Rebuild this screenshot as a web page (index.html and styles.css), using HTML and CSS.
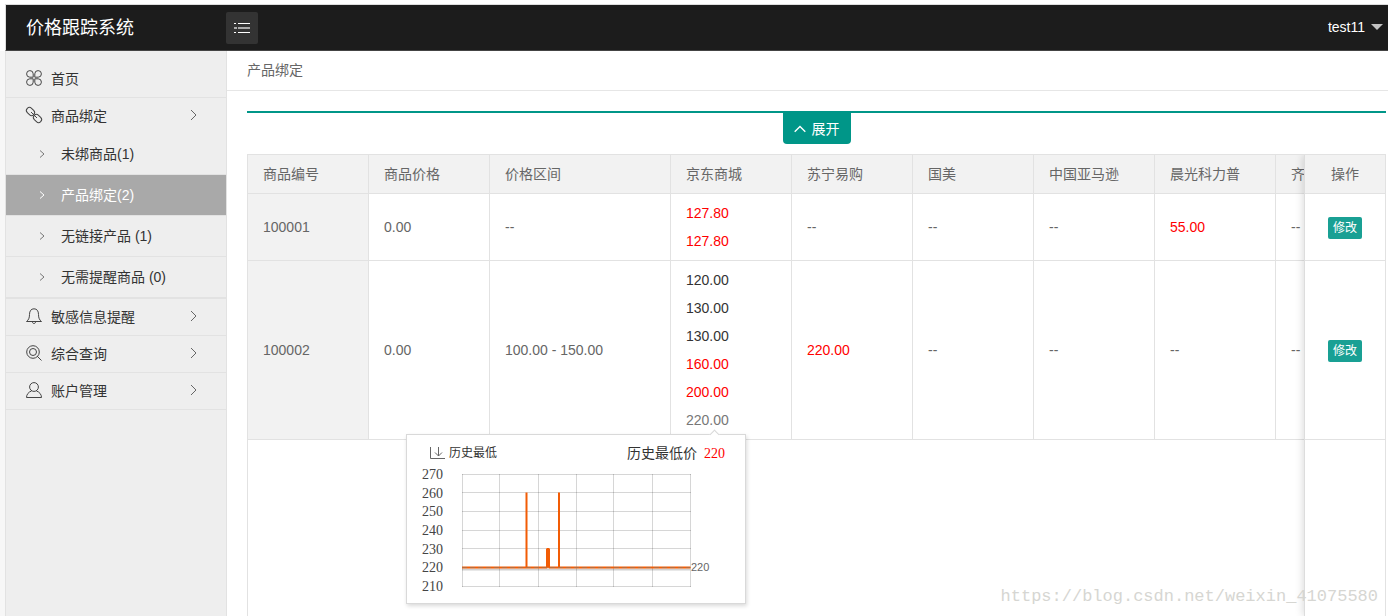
FILE: index.html
```html
<!DOCTYPE html>
<html lang="zh-CN">
<head>
<meta charset="utf-8">
<title>价格跟踪系统</title>
<link rel="stylesheet" href="styles.css">
</head>
<body>
<div class="app">
  <header class="topbar">
    <h1 class="brand">价格跟踪系统</h1>
    <button class="menu-toggle" type="button" aria-label="菜单">
      <svg width="16" height="12" viewBox="0 0 16 12" fill="none" stroke="#fff"><path d="M0 1.500h2M4 1.500h12M0 10.500h2M4 10.500h12"/><path d="M0 6h3M4 6h12" stroke="#aaa" stroke-width="2"/></svg>
    </button>
    <button class="user" type="button">test11<span class="caret"></span></button>
  </header>
  <div class="body">
    <nav class="sidebar">
      <ul class="nav">
        <li class="nav-item"><a href="#" class="nav-link">
          <svg class="icon" viewBox="0 0 16 16"><path d="M7.200 7.200H3.800a3.300 3.300 0 1 1 3.400-3.400zM8.800 7.200h3.400a3.300 3.300 0 1 0-3.400-3.400zM7.200 8.800H3.800a3.300 3.300 0 1 0 3.400 3.400zM8.800 8.800h3.400a3.300 3.300 0 1 1-3.400 3.400z"/></svg>
          <span>首页</span></a></li>
        <li class="nav-item"><a href="#" class="nav-link">
          <svg class="icon" viewBox="0 0 16 16"><rect x="0" y="1.500" width="9" height="6" rx="3" transform="rotate(45 4.500 4.500)"/><rect x="7" y="8.500" width="9" height="6" rx="3" transform="rotate(45 11.500 11.500)"/><path d="M5 5l6 6"/></svg>
          <span>商品绑定</span>
          <svg class="arrow" viewBox="0 0 7 12"><path d="M1 1l5 5-5 5"/></svg></a>
          <ul class="subnav">
            <li><a href="#" class="sub-link"><svg class="sub-arrow" viewBox="0 0 6 8"><path d="M1 .5L5 4 1 7.500"/></svg>未绑商品(1)</a></li>
            <li><a href="#" class="sub-link active"><svg class="sub-arrow" viewBox="0 0 6 8"><path d="M1 .5L5 4 1 7.500"/></svg>产品绑定(2)</a></li>
            <li><a href="#" class="sub-link"><svg class="sub-arrow" viewBox="0 0 6 8"><path d="M1 .5L5 4 1 7.500"/></svg>无链接产品 (1)</a></li>
            <li><a href="#" class="sub-link"><svg class="sub-arrow" viewBox="0 0 6 8"><path d="M1 .5L5 4 1 7.500"/></svg>无需提醒商品 (0)</a></li>
          </ul></li>
        <li class="nav-item"><a href="#" class="nav-link">
          <svg class="icon" viewBox="0 0 16 16"><path d="M.5 13.500C2.500 12 3.500 10 3.500 6.500 3.500 3 5 .8 8 .8s4.500 2.200 4.500 5.700c0 3.500 1 5.500 3 7zM6.500 14c0 2 3 2 3 0"/></svg>
          <span>敏感信息提醒</span>
          <svg class="arrow" viewBox="0 0 7 12"><path d="M1 1l5 5-5 5"/></svg></a></li>
        <li class="nav-item"><a href="#" class="nav-link">
          <svg class="icon" viewBox="0 0 16 16"><circle cx="7" cy="7" r="6.300"/><circle cx="7" cy="7" r="3.500"/><path d="M11 11l4.500 4.500"/></svg>
          <span>综合查询</span>
          <svg class="arrow" viewBox="0 0 7 12"><path d="M1 1l5 5-5 5"/></svg></a></li>
        <li class="nav-item"><a href="#" class="nav-link">
          <svg class="icon" viewBox="0 0 16 16"><circle cx="8" cy="5" r="4.400"/><path d="M5.500 9C2.500 10 .5 12.500.5 15.500h15c0-3-2-5.500-5-6.500"/></svg>
          <span>账户管理</span>
          <svg class="arrow" viewBox="0 0 7 12"><path d="M1 1l5 5-5 5"/></svg></a></li>
      </ul>
    </nav>
    <main class="main">
      <div class="crumb">产品绑定</div>
      <div class="filter">
        <button class="expand" type="button"><svg width="12" height="8" viewBox="0 0 12 8" fill="none" stroke="#fff" stroke-width="1.400"><path d="M.7 6.700L6 1.500l5.300 5.200"/></svg>展开</button>
      </div>
      <div class="grid">
        <div class="grid-scroll">
          <table class="data">
            <colgroup><col class="c"><col class="c"><col class="c-wide"><col class="c"><col class="c"><col class="c"><col class="c"><col class="c"><col class="c"></colgroup>
            <thead><tr><th>商品编号</th><th>商品价格</th><th>价格区间</th><th>京东商城</th><th>苏宁易购</th><th>国美</th><th>中国亚马逊</th><th>晨光科力普</th><th>齐</th></tr></thead>
            <tbody>
              <tr>
                <td class="key">100001</td><td>0.00</td><td>--</td>
                <td><ul class="prices"><li class="low">127.80</li><li class="low">127.80</li></ul></td>
                <td>--</td><td>--</td><td>--</td><td class="low">55.00</td><td>--</td>
              </tr>
              <tr>
                <td class="key">100002</td><td>0.00</td><td>100.00 - 150.00</td>
                <td><ul class="prices">
                  <li>120.00</li><li>130.00</li><li>130.00</li><li class="low">160.00</li><li class="low">200.00</li>
                  <li class="hover">220.00
                    <div class="popup">
                      <div class="popup-head">
                        <span class="legend"><svg width="16" height="12" viewBox="0 0 16 12" fill="none" stroke="#666"><path d="M.5 0v11.500H15M8.500 0v9M5 5.500L8.500 9 12 5.500"/></svg>历史最低</span>
                        <span class="lowest">历史最低价<b>220</b></span>
                      </div>
                      <svg class="chart" viewBox="407 466 338 132">
                        <path class="gridline" d="M462 474.500h229M462 492.500h229M462 511.500h229M462 530.500h229M462 548.500h229M462 567.500h229M462 586.500h229M462.500 474v113M499.500 474v113M538.500 474v113M576.500 474v113M613.500 474v113M652.500 474v113M690.500 474v113"/>
                        <path class="shade" d="M462 569.500h228"/>
                        <path class="series" d="M462 567.500h64.500V492.500v75H547V549h2v18.500h10V492.500v75h131.500"/>
                        <path class="dash" d="M462 567.500h228"/>
                        <g class="ticks"><text x="422" y="479">270</text><text x="422" y="498">260</text><text x="422" y="516">250</text><text x="422" y="535">240</text><text x="422" y="554">230</text><text x="422" y="572">220</text><text x="422" y="591">210</text></g>
                        <text class="mark" x="691" y="571">220</text>
                      </svg>
                    </div>
                  </li>
                </ul></td>
                <td class="low">220.00</td><td>--</td><td>--</td><td>--</td><td>--</td>
              </tr>
            </tbody>
          </table>
        </div>
        <div class="grid-fixed">
          <table class="data">
            <thead><tr><th>操作</th></tr></thead>
            <tbody>
              <tr class="row-short"><td><button class="edit" type="button">修改</button></td></tr>
              <tr class="row-tall"><td><button class="edit" type="button">修改</button></td></tr>
            </tbody>
          </table>
        </div>
      </div>
    </main>
  </div>
  <div class="watermark">https://blog.csdn.net/weixin_41075580</div>
</div>
</body>
</html>
```
FILE: styles.css
```css
* { box-sizing: border-box; }
body, h1, ul { margin: 0; padding: 0; }
ul { list-style: none; }
a { color: inherit; text-decoration: none; }
button { border: 0; padding: 0; font: inherit; color: inherit; cursor: pointer; }
svg { flex: none; }
body {
  font: 14px/20px "Liberation Sans", "Noto Sans CJK SC", sans-serif;
  color: #666;
  background: #fff;
}
.app {
  position: relative;
  display: flex;
  flex-direction: column;
  height: 100vh;
  padding-top: 4px;
  overflow: hidden;
}
.topbar {
  flex: none;
  display: flex;
  align-items: center;
  height: 47px;
  margin-left: 5px;
  padding-right: 5px;
  background: #1c1c1c;
  border-top: 1px solid #ddd;
  border-bottom: 1px solid #444;
  border-left: 1px solid #ddd;
  color: #fff;
}
.brand { width: 220px; padding-left: 20px; font-size: 18px; font-weight: 400; }
.menu-toggle {
  display: flex;
  align-items: center;
  justify-content: center;
  width: 32px;
  height: 32px;
  border-radius: 2px;
  background: #333;
}
.user {
  display: flex;
  align-items: center;
  gap: 6px;
  margin-left: auto;
  padding-bottom: 2px;
  background: none;
}
.caret { border: 6px solid transparent; border-top-color: #c2c2c2; border-bottom: 0; }
.body { flex: 1; display: flex; min-height: 0; border-left: 5px solid #f7f7f7; }
.sidebar {
  flex: none;
  width: 222px;
  padding-top: 10px;
  background: #eee;
  border-left: 1px solid #e2e2e2;
  border-right: 1px solid #e2e2e2;
  color: #333;
}
.nav-item { border-bottom: 1px solid #e2e2e2; }
.nav-link { display: flex; align-items: center; height: 36px; padding: 0 29px 0 20px; gap: 9px; }
.icon { width: 16px; height: 16px; margin-bottom: 2px; fill: none; stroke: #444; overflow: visible; }
.arrow { width: 7px; height: 12px; margin: 0 0 2px auto; fill: none; stroke: #666; }
.sub-link {
  display: flex;
  align-items: center;
  gap: 16px;
  height: 41px;
  padding-left: 33px;
  border-bottom: 1px solid #e2e2e2;
}
.sub-arrow { width: 6px; height: 8px; fill: none; stroke: #777; overflow: visible; }
.active { background: #a9a9a9; color: #fff; }
.active .sub-arrow { stroke: #fff; }
.main { flex: 1; display: flex; flex-direction: column; min-width: 0; }
.crumb { height: 40px; padding: 9px 20px; line-height: 20px; border-bottom: 1px solid #e6e6e6; }
.filter {
  display: flex;
  justify-content: center;
  margin: 20px 2px 10px 20px;
  border-top: 2px solid #009688;
}
.expand {
  display: flex;
  align-items: center;
  gap: 6px;
  height: 31px;
  padding: 0 11px;
  border-radius: 0 0 4px 4px;
  background: #009688;
  color: #fff;
}
.grid {
  flex: 1;
  display: flex;
  min-height: 0;
  margin: 0 2px 0 20px;
  border: solid #e2e2e2;
  border-width: 1px 1px 0;
}
.grid-scroll { flex: 1; min-width: 0; overflow: hidden; }
.grid-fixed {
  flex: none;
  width: 81px;
  border-left: 1px solid #ddd;
  background: #fff;
  box-shadow: -1px 0 8px rgba(0, 0, 0, .15);
  clip-path: inset(0 0 0 -10px);
}
.data { width: 100%; border-collapse: separate; border-spacing: 0; table-layout: fixed; }
.grid-scroll .data { width: 1149px; }
.c { width: 121px; }
.c-wide { width: 181px; }
.data th {
  height: 39px;
  padding: 0 15px;
  background: #f2f2f2;
  font-weight: 400;
  text-align: left;
  border: solid #e2e2e2;
  border-width: 0 1px 1px 0;
}
.data td { padding: 5px 15px; border: solid #e2e2e2; border-width: 0 1px 1px 0; }
.data .key { background: #f2f2f2; }
.grid-fixed .data th, .grid-fixed .data td { padding: 0; text-align: center; border-right: 0; }
.grid-fixed .data td { padding-top: 2px; }
.row-short { height: 67px; }
.row-tall { height: 179px; }
.edit {
  height: 22px;
  padding: 0 5px;
  border-radius: 2px;
  background: #19a094;
  color: #fff;
  font-size: 12px;
  line-height: 22px;
  vertical-align: middle;
}
.prices li { line-height: 28px; color: #333; }
.prices .hover { position: relative; color: #777; }
.data .low, .prices .low { color: #f00; }
.popup {
  position: absolute;
  top: 100%;
  left: -280px;
  width: 340px;
  height: 170px;
  background: #fff;
  border: 1px solid #d9d9d9;
  box-shadow: 1px 2px 4px rgba(0, 0, 0, .15);
  color: #333;
}
.popup::before {
  content: "";
  position: absolute;
  top: -4px;
  left: 304px;
  width: 6px;
  height: 6px;
  background: #fff;
  border: solid #d9d9d9;
  border-width: 1px 0 0 1px;
  transform: rotate(45deg);
}
.popup-head {
  display: flex;
  align-items: center;
  justify-content: space-between;
  height: 36px;
  padding: 0 20px 0 23px;
}
.legend { display: flex; align-items: center; gap: 3px; font-size: 12px; }
.lowest b { margin-left: 7px; font: 14px "Liberation Serif", serif; color: #f00; }
.chart { display: block; width: 100%; margin-top: -5px; }
.gridline { fill: none; stroke: #000; stroke-opacity: .16; }
.shade { stroke: #000; stroke-opacity: .18; stroke-width: 2; }
.series { fill: none; stroke: #f25c05; stroke-width: 2; stroke-linejoin: bevel; }
.dash { stroke: #8a7a68; stroke-opacity: .6; stroke-dasharray: 5 3; }
.ticks { font: 14px "Liberation Serif", serif; fill: #444; }
.mark { font-size: 11px; fill: #666; }
.watermark {
  position: absolute;
  right: 10px;
  bottom: 9px;
  font: 17px/20px "Liberation Mono", monospace;
  color: #d6d6d2;
  pointer-events: none;
}
```
